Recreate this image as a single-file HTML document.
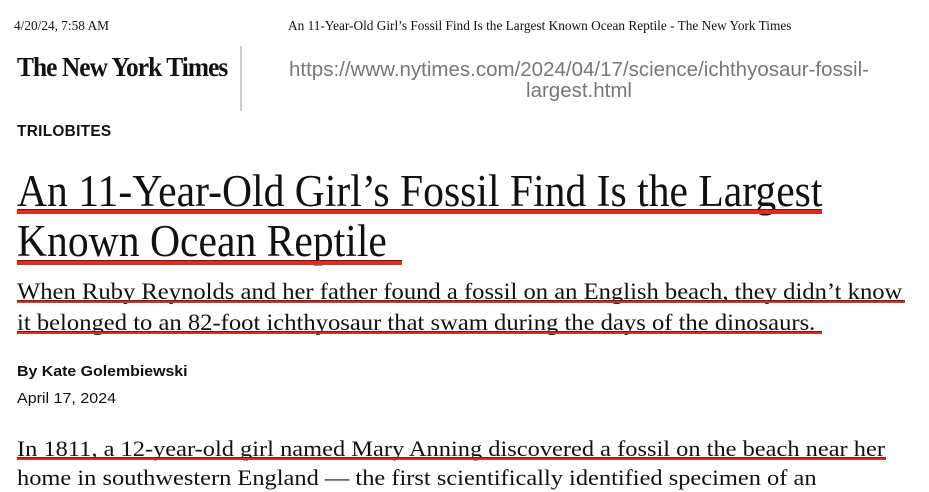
<!DOCTYPE html>
<html><head><meta charset="utf-8"><style>
body{margin:0;width:929px;height:484px;overflow:hidden;background:#fff;position:relative;font-family:"Liberation Serif",serif;color:#111}
.a{position:absolute;white-space:nowrap;transform-origin:0 0}
.r{position:absolute;background:#e8281e}
.k{position:absolute;background:#333}
</style></head><body>
<div class="a" style="left:14px;top:18px;font-size:13.3px">4/20/24, 7:58 AM</div>
<div class="a" style="left:288px;top:18px;font-size:13.3px">An 11-Year-Old Girl’s Fossil Find Is the Largest Known Ocean Reptile - The New York Times</div>
<div class="a" style="left:17px;top:52px;font-family:'Liberation Serif',serif;font-weight:bold;font-size:27px;letter-spacing:-1px;transform:scaleX(0.94)">The New York Times</div>
<div style="position:absolute;left:240px;top:46px;width:2px;height:65px;background:#ccc"></div>
<div class="a" style="left:270px;top:59px;font-family:'Liberation Sans',sans-serif;font-size:20.5px;color:#777;text-align:center;width:618px;white-space:normal;line-height:21px">https://www.nytimes.com/2024/04/17/science/ichthyosaur-fossil-largest.html</div>
<div class="a" style="left:17px;top:123px;font-family:'Liberation Sans',sans-serif;font-weight:bold;font-size:15.4px;letter-spacing:0.3px">TRILOBITES</div>

<div class="a" style="left:17px;top:166px;font-size:45px;line-height:50px;transform:scaleX(0.925)">An 11-Year-Old Girl’s Fossil Find Is the Largest<br>Known Ocean Reptile</div>
<div class="k" style="left:17px;top:209px;width:805px;height:1px"></div>
<div class="r" style="left:17px;top:210px;width:805px;height:4px"></div>
<div class="k" style="left:17px;top:260px;width:385px;height:1px"></div>
<div class="r" style="left:17px;top:261px;width:385px;height:4px"></div>

<div class="a" style="left:17px;top:276px;font-size:23px;line-height:31px;transform:scaleX(1.07)">When Ruby Reynolds and her father found a fossil on an English beach, they didn’t know<br>it belonged to an 82-foot ichthyosaur that swam during the days of the dinosaurs.</div>
<div class="k" style="left:17px;top:300px;width:888px;height:1px"></div>
<div class="r" style="left:17px;top:301px;width:888px;height:2px"></div>
<div class="k" style="left:17px;top:331px;width:805px;height:1px"></div>
<div class="r" style="left:17px;top:332px;width:805px;height:2px"></div>

<div class="a" style="left:17px;top:363px;font-family:'Liberation Sans',sans-serif;font-weight:bold;font-size:15px;transform:scaleX(1.06)">By Kate Golembiewski</div>
<div class="a" style="left:17px;top:390px;font-family:'Liberation Sans',sans-serif;font-size:15px;transform:scaleX(1.07)">April 17, 2024</div>

<div class="a" style="left:17px;top:434px;font-size:22px;line-height:29px;transform:scaleX(1.11)">In 1811, a 12-year-old girl named Mary Anning discovered a fossil on the beach near her<br>home in southwestern England — the first scientifically identified specimen of an</div>
<div class="k" style="left:17px;top:457px;width:869px;height:1px"></div>
<div class="r" style="left:17px;top:458px;width:869px;height:2px"></div>
</body></html>
